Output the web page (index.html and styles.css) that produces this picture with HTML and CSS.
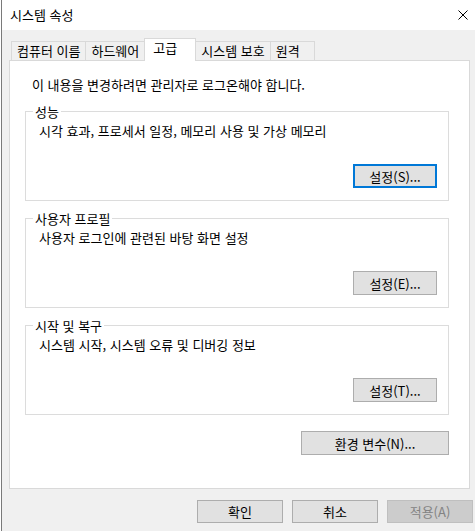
FILE: index.html
```html
<!DOCTYPE html>
<html lang="ko">
<head>
    <meta charset="UTF-8">
    <meta name="viewport" content="width=device-width, initial-scale=1.0">
    <title>시스템 속성</title>
    <link rel="stylesheet" href="styles.css">
</head>
<body>
    <div class="window">
        <div class="titlebar">
            <span class="title">시스템 속성</span>
            <button class="close" aria-label="닫기">
                <svg width="10" height="10" viewBox="0 0 10 10">
                    <path d="M0.5 0.5 L9.5 9.5 M9.5 0.5 L0.5 9.5" stroke="#000" stroke-width="1" fill="none"/>
                </svg>
            </button>
        </div>

        <div class="tabs">
            <div class="tab">컴퓨터 이름</div>
            <div class="tab">하드웨어</div>
            <div class="tab active">고급</div>
            <div class="tab">시스템 보호</div>
            <div class="tab">원격</div>
        </div>

        <div class="panel">
            <p class="notice">이 내용을 변경하려면 관리자로 로그온해야 합니다.</p>

            <fieldset class="group">
                <legend>성능</legend>
                <p class="group-text">시각 효과, 프로세서 일정, 메모리 사용 및 가상 메모리</p>
                <div class="group-actions">
                    <button class="btn default">설정(S)...</button>
                </div>
            </fieldset>

            <fieldset class="group">
                <legend>사용자 프로필</legend>
                <p class="group-text">사용자 로그인에 관련된 바탕 화면 설정</p>
                <div class="group-actions">
                    <button class="btn">설정(E)...</button>
                </div>
            </fieldset>

            <fieldset class="group">
                <legend>시작 및 복구</legend>
                <p class="group-text">시스템 시작, 시스템 오류 및 디버깅 정보</p>
                <div class="group-actions">
                    <button class="btn">설정(T)...</button>
                </div>
            </fieldset>

            <div class="panel-actions">
                <button class="btn wide">환경 변수(N)...</button>
            </div>
        </div>

        <div class="footer">
            <button class="btn">확인</button>
            <button class="btn">취소</button>
            <button class="btn" disabled>적용(A)</button>
        </div>
    </div>
</body>
</html>
```

FILE: styles.css
```css
html, body {
    margin: 0;
    overflow: hidden;
}
body {
    font-family: "Noto Sans CJK KR", "Noto Sans", sans-serif;
    font-size: 13px;
    color: #000;
    background: #fff;
}
.window {
    margin-left: 1px;
    border-left: 1px solid #7a7a7a;
    height: 531px;
    background: #f0f0f0;
}
.titlebar {
    height: 30px;
    background: #fff;
    display: flex;
    align-items: center;
    justify-content: space-between;
    padding: 0 7px 0 8px;
}
.title {
    line-height: 16px;
}
.close {
    border: none;
    background: none;
    padding: 0;
    width: 10px;
    height: 10px;
    display: flex;
}
.tabs {
    height: 30px;
    display: flex;
    align-items: flex-end;
    padding-left: 9px;
}
.tab {
    box-sizing: border-box;
    height: 19px;
    line-height: 18px;
    min-width: 45px;
    padding: 0 5px;
    border: 1px solid #d9d9d9;
    border-bottom: none;
    margin-right: -1px;
    background: #f0f0f0;
    white-space: nowrap;
}
.tab.active {
    height: 23px;
    min-width: 52px;
    padding: 0 8px;
    margin-bottom: -1px;
    background: #fff;
    position: relative;
    z-index: 1;
}
.panel {
    box-sizing: border-box;
    margin-left: 7px;
    width: 461px;
    height: 429px;
    border: 1px solid #d9d9d9;
    background: #fff;
    padding: 16px 20px 0 15px;
}
.notice {
    margin: 0 0 10px 7px;
    line-height: 16px;
}
.group {
    margin: 9px 0 0;
    padding: 0;
    border: 1px solid #dcdcdc;
    min-inline-size: 0;
}
.notice + .group {
    margin-top: 0;
}
.group legend {
    margin-left: 7px;
    padding: 0 2px;
    line-height: 17px;
}
.group-text {
    margin: 3px 0 0 13px;
    line-height: 16px;
}
.group-actions {
    display: flex;
    justify-content: flex-end;
    margin-top: 25px;
    padding: 0 11px 12px 0;
}
.btn {
    box-sizing: border-box;
    font-family: inherit;
    font-size: 13px;
    color: #000;
    width: 84px;
    height: 24px;
    padding: 0;
    background: #e1e1e1;
    border: 1px solid #adadad;
    border-radius: 0;
}
.btn.default {
    border: 2px solid #0078d7;
}
.btn.wide {
    width: 148px;
}
.btn:disabled {
    background: #cccccc;
    border-color: #bfbfbf;
    color: #838383;
}
.panel-actions {
    display: flex;
    justify-content: flex-end;
    margin-top: 16px;
}
.footer {
    display: flex;
    justify-content: flex-end;
    gap: 9px;
    margin-top: 11px;
    padding-right: 2px;
}
.footer .btn {
    width: 86px;
    height: 23px;
}
```
